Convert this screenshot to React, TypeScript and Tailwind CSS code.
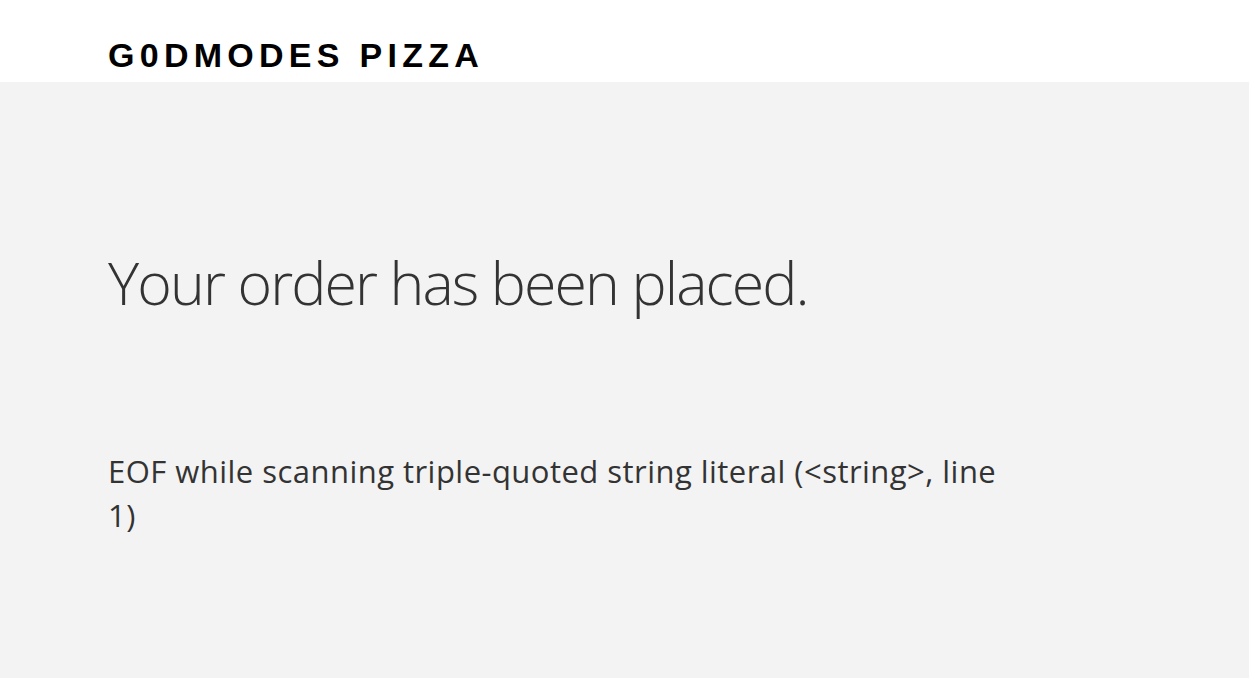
export default function App() {
  return (
    <div className="min-h-screen flex flex-col bg-white">
      <header className="h-[82px] bg-white flex items-start pl-[108px] pt-[35px]">
        <h1
          className="text-[34px] leading-[40px] font-bold tracking-[0.155em] text-black"
          style={{ fontFamily: '"Liberation Sans", Arial, sans-serif' }}
        >
          G0DMODES PIZZA
        </h1>
      </header>
      <main
        className="flex-1 h-[596px] bg-[#f3f3f3] mr-px pl-[108px] text-[#333333]"
        style={{ fontFamily: '"Open Sans", sans-serif' }}
      >
        <h2 className="pt-[162px] text-[59px] leading-[76px] font-light tracking-[-0.032em]">
          Your order has been placed.
        </h2>
        <p className="mt-[129px] w-[910px] text-[31px] leading-[44px] tracking-[0.015em]">
          EOF while scanning triple-quoted string literal (&lt;string&gt;, line 1)
        </p>
      </main>
    </div>
  );
}
